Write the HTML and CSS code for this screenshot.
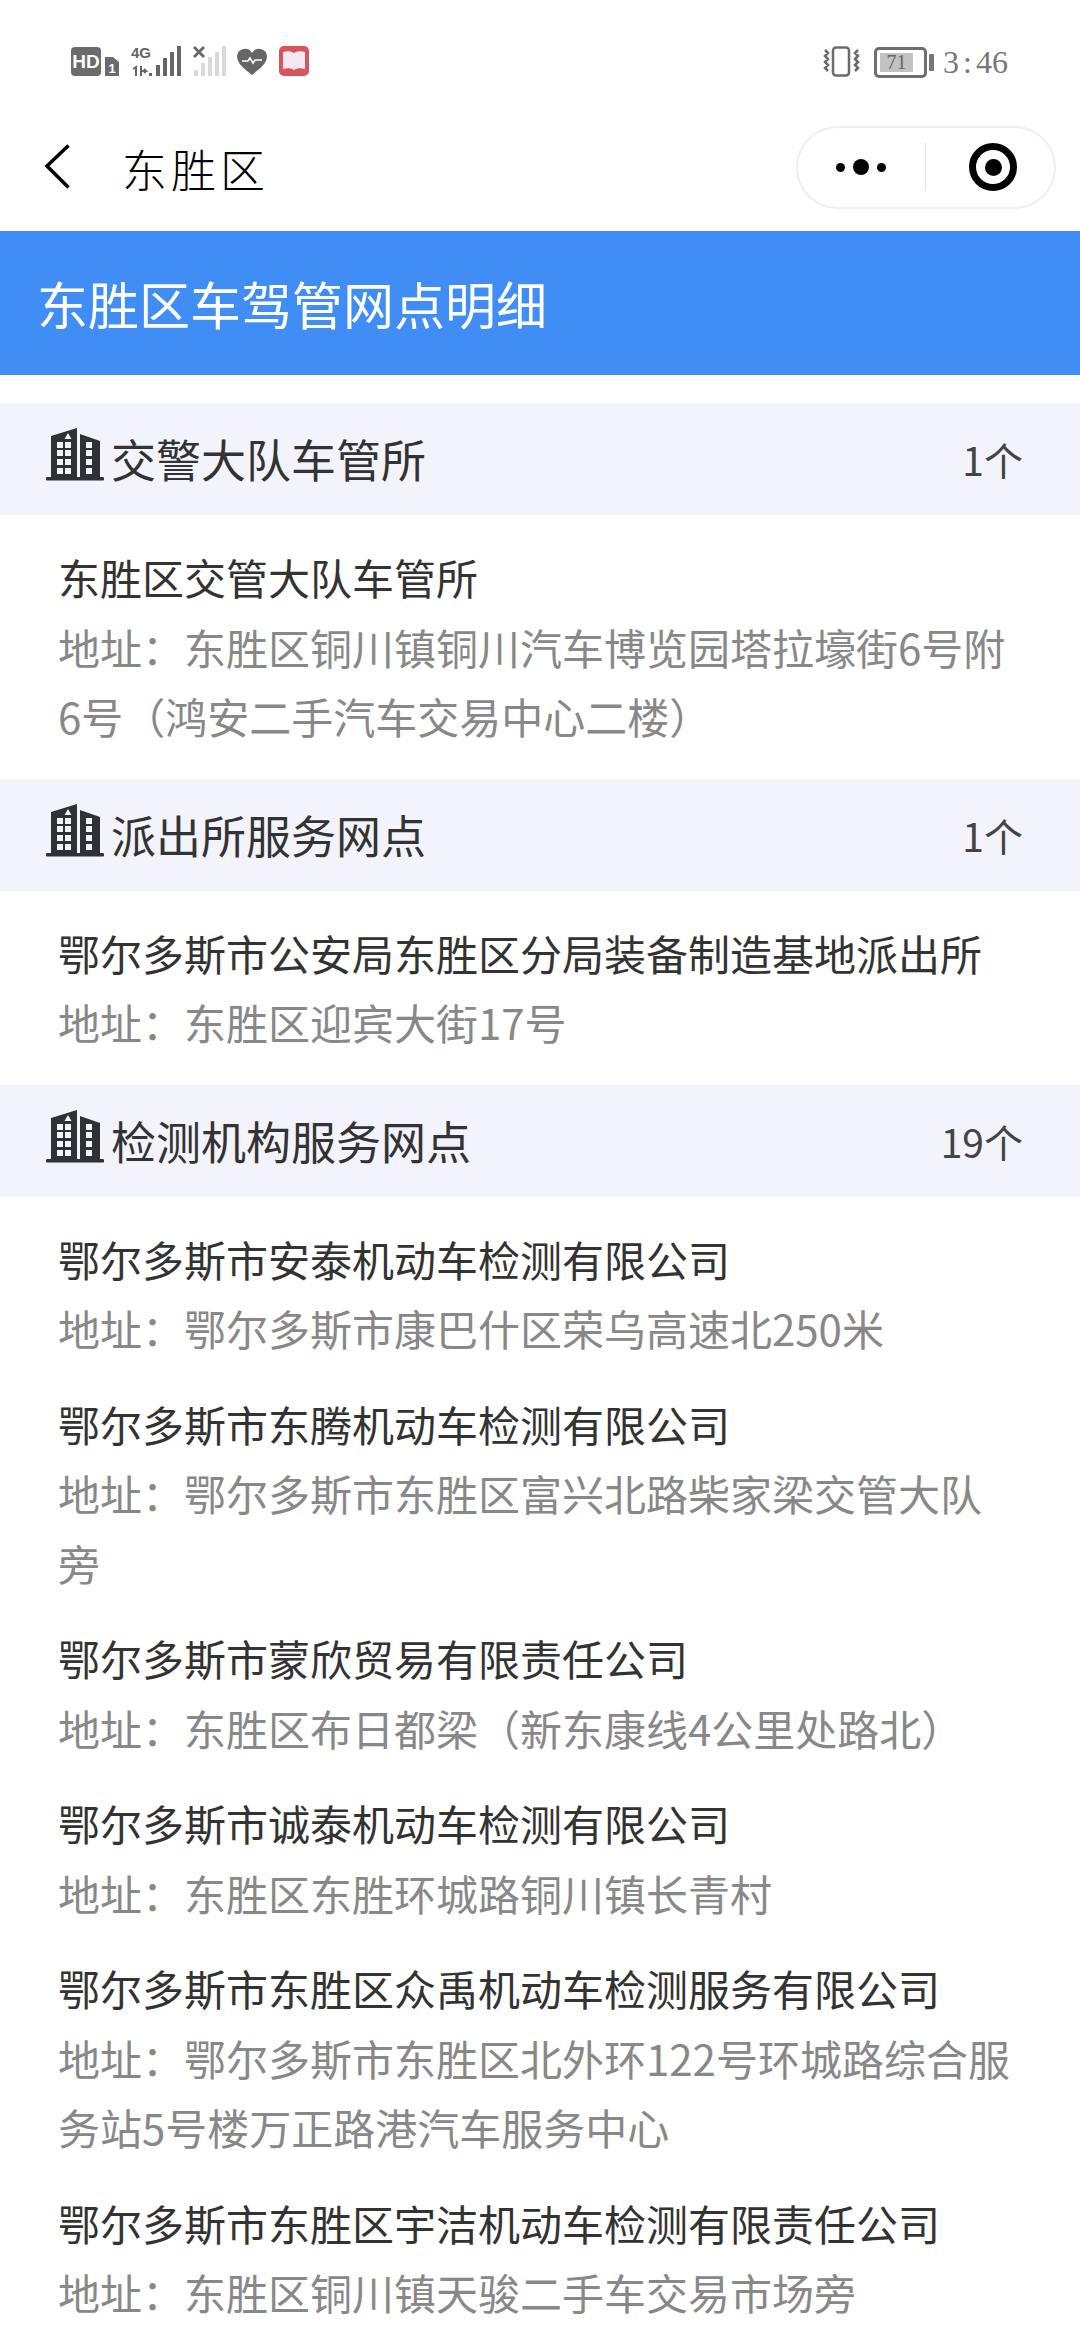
FILE: index.html
```html
<!DOCTYPE html>
<html lang="zh-CN">
<head>
<meta charset="utf-8">
<title>东胜区</title>
<link rel="stylesheet" href="styles.css">
</head>
<body>
<svg class="defs" width="0" height="0" aria-hidden="true">
  <symbol id="building" viewBox="0 0 58 54">
    <path fill="#2f3136" d="M1.500 49H5V8L31 0v49h3V6l20 7v36h2.500a1.800 1.800 0 0 1 0 3.600h-55a1.800 1.800 0 0 1 0-3.600z"/>
    <g fill="#f2f3fb">
      <path d="M22 5l3.500 6h-7z"/>
      <rect x="11" y="14" width="6" height="6"/><rect x="19" y="14" width="6" height="6"/>
      <rect x="11" y="22" width="6" height="6"/><rect x="19" y="22" width="6" height="6"/>
      <rect x="11" y="31" width="6" height="6"/><rect x="19" y="31" width="6" height="6"/>
      <rect x="11" y="40" width="6" height="6"/><rect x="19" y="40" width="6" height="6"/>
      <rect x="40" y="14" width="6" height="6"/><rect x="40" y="22" width="6" height="6"/>
      <rect x="40" y="31" width="6" height="6"/><rect x="40" y="40" width="6" height="6"/>
    </g>
  </symbol>
</svg>

<div class="status">
  <div class="status-left">
    <svg class="ic-hd" width="48" height="30" viewBox="0 0 48 30">
      <rect width="30" height="29" rx="4" fill="#6b6b6b"/>
      <text x="15" y="21" class="hd-text">HD</text>
      <path d="M34 10h8l6 5v14h-14z" fill="#6b6b6b"/>
      <text x="41" y="26" class="hd-one">1</text>
    </svg>
    <svg class="ic-sig" width="50" height="36" viewBox="0 -6 50 36">
      <text x="0" y="12" class="sig-text">4G</text>
      <path d="M5 30v-9l-3 2M10 20v10M10 25h5l-2-2M15 25l-2 2" fill="none" stroke="#666" stroke-width="2"/>
      <g fill="#666">
        <rect x="18" y="27" width="3" height="3"/><rect x="25" y="19" width="4" height="11"/>
        <rect x="32" y="12" width="4" height="18"/><rect x="39" y="6" width="4" height="24"/>
        <rect x="46" y="0" width="4" height="30"/>
      </g>
    </svg>
    <svg class="ic-sig2" width="33" height="30" viewBox="0 0 33 30">
      <path d="M1 1l10 10M11 1L1 11" stroke="#666" stroke-width="2.800" fill="none"/>
      <g fill="#d9d9d9">
        <rect x="1" y="24" width="4" height="6"/><rect x="8" y="17" width="4" height="13"/>
        <rect x="15" y="11" width="4" height="19"/><rect x="22" y="6" width="4" height="24"/>
        <rect x="29" y="0" width="4" height="30"/>
      </g>
    </svg>
    <svg class="ic-heart" width="30" height="27" viewBox="0 0 30 27">
      <path fill="#666" d="M15 27C8 21 0 16 0 8a8 8 0 0 1 15-3 8 8 0 0 1 15 3c0 8-8 13-15 19z"/>
      <path d="M5 13h6l2-3 3 5 2-3h7" stroke="#fff" stroke-width="1.600" fill="none"/>
    </svg>
    <svg class="ic-book" width="30" height="30" viewBox="0 0 30 30">
      <rect width="30" height="30" rx="5" fill="#d9545c"/>
      <path fill="#f4e9f1" d="M4 6c4-1 8-1 11 1 3-2 7-2 11-1v17c-4-1-8-1-11 1-3-2-7-2-11-1z"/>
    </svg>
  </div>
  <div class="status-right">
    <svg width="40" height="32" viewBox="0 0 40 32">
      <rect x="11" y="1.500" width="16" height="28" rx="3" fill="none" stroke="#6b6b6b" stroke-width="2.500"/>
      <path d="M3 4l3 3-3 3 3 3-3 3 3 3-3 3 3 3M36 4l-3 3 3 3-3 3 3 3-3 3 3 3-3 3" fill="none" stroke="#6b6b6b" stroke-width="2.500"/>
    </svg>
    <div class="battery"><span class="battery-fill">71</span></div>
    <span class="battery-cap"></span>
    <span class="clock">3<span class="colon">:</span>46</span>
  </div>
</div>

<div class="nav">
  <svg class="back" width="26" height="46" viewBox="0 0 26 46"><path d="M24.500 1.500L3 22l21.500 21.500" fill="none" stroke="#000" stroke-width="3.500"/></svg>
  <span class="nav-title">东胜区</span>
  <div class="capsule">
    <div class="dots"><i class="dot"></i><i class="dot big"></i><i class="dot"></i></div>
    <span class="divider"></span>
    <div class="target"><i></i></div>
  </div>
</div>

<h1 class="banner">东胜区车驾管网点明细</h1>

<main class="list">
  <section>
    <div class="head"><svg class="bld"><use href="#building"/></svg><span class="head-title">交警大队车管所</span><span class="count">1个</span></div>
    <div class="items">
      <div class="item"><div class="name">东胜区交管大队车管所</div><div class="addr">地址：东胜区铜川镇铜川汽车博览园塔拉壕街6号附6号（鸿安二手汽车交易中心二楼）</div></div>
    </div>
  </section>
  <section>
    <div class="head"><svg class="bld"><use href="#building"/></svg><span class="head-title">派出所服务网点</span><span class="count">1个</span></div>
    <div class="items">
      <div class="item"><div class="name">鄂尔多斯市公安局东胜区分局装备制造基地派出所</div><div class="addr">地址：东胜区迎宾大街17号</div></div>
    </div>
  </section>
  <section>
    <div class="head"><svg class="bld"><use href="#building"/></svg><span class="head-title">检测机构服务网点</span><span class="count">19个</span></div>
    <div class="items">
      <div class="item"><div class="name">鄂尔多斯市安泰机动车检测有限公司</div><div class="addr">地址：鄂尔多斯市康巴什区荣乌高速北250米</div></div>
      <div class="item"><div class="name">鄂尔多斯市东腾机动车检测有限公司</div><div class="addr">地址：鄂尔多斯市东胜区富兴北路柴家梁交管大队旁</div></div>
      <div class="item"><div class="name">鄂尔多斯市蒙欣贸易有限责任公司</div><div class="addr">地址：东胜区布日都梁（新东康线4公里处路北）</div></div>
      <div class="item"><div class="name">鄂尔多斯市诚泰机动车检测有限公司</div><div class="addr">地址：东胜区东胜环城路铜川镇长青村</div></div>
      <div class="item"><div class="name">鄂尔多斯市东胜区众禹机动车检测服务有限公司</div><div class="addr">地址：鄂尔多斯市东胜区北外环122号环城路综合服务站5号楼万正路港汽车服务中心</div></div>
      <div class="item"><div class="name">鄂尔多斯市东胜区宇洁机动车检测有限责任公司</div><div class="addr">地址：东胜区铜川镇天骏二手车交易市场旁</div></div>
    </div>
  </section>
</main>
</body>
</html>
```
FILE: styles.css
```css
* { box-sizing: border-box; }
html, body { margin: 0; padding: 0; }
body {
  width: 1080px;
  height: 2340px;
  overflow: hidden;
  background: #fff;
  font-family: "Noto Sans CJK SC", "Noto Sans", sans-serif;
}
.defs { position: absolute; }

.status {
  height: 108px;
  padding: 46px 72px 0 71px;
  display: flex;
  justify-content: space-between;
  align-items: flex-start;
}
.status-left { display: flex; align-items: flex-start; gap: 12px; }
.status-left svg, .status-right svg { display: block; }
.ic-hd { margin-top: 1px; }
.ic-sig { margin-top: -6px; }
.ic-heart { margin-top: 2px; margin-left: -1px; }
.hd-text { font: 700 19px "Liberation Sans", sans-serif; fill: #fff; text-anchor: middle; }
.hd-one { font: 700 13px "Liberation Sans", sans-serif; fill: #fff; text-anchor: middle; }
.sig-text { font: 700 15px "Liberation Sans", sans-serif; fill: #666; }
.status-right { display: flex; align-items: center; height: 32px; }
.battery {
  width: 53px;
  height: 31px;
  margin-left: 12px;
  border: 3px solid #6e6e6e;
  border-radius: 5px;
  padding: 3px;
  display: flex;
}
.battery-fill {
  width: 33px;
  background: #c2c2c2;
  color: #666;
  font: 20px/19px "Liberation Serif", serif;
  text-align: center;
}
.battery-cap { width: 5px; height: 17px; margin-left: 2px; background: #777; border-radius: 1px; }
.clock { margin-left: 9px; font: 32px/32px "Liberation Serif", serif; color: #777; }
.colon { margin: 0 4px; }

.nav {
  height: 123px;
  padding: 0 24px 5px 44px;
  display: flex;
  align-items: center;
}
.back { display: block; }
.nav-title { margin: 3px 0 0 52px; font-size: 45px; font-weight: 300; letter-spacing: 4px; color: #000; }
.capsule {
  margin-left: auto;
  width: 260px;
  height: 83px;
  border: 2px solid #efefef;
  border-radius: 42px;
  display: flex;
  align-items: center;
}
.dots { width: 125px; margin-right: 2px; display: flex; align-items: center; justify-content: center; gap: 8px; }
.dot { width: 9px; height: 9px; border-radius: 50%; background: #000; }
.dot.big { width: 16px; height: 16px; }
.divider { width: 1px; height: 48px; background: #e2e2e2; }
.target {
  width: 48px;
  height: 48px;
  margin-left: 43px;
  border: 7px solid #000;
  border-radius: 50%;
  display: flex;
  align-items: center;
  justify-content: center;
}
.target i { width: 17px; height: 17px; border-radius: 50%; background: #000; }

.banner {
  margin: 0;
  height: 144px;
  padding-left: 37px;
  background: #408ef5;
  color: #fff;
  font-size: 51px;
  font-weight: 400;
  line-height: 144px;
}

.list { padding-top: 28px; }
.head {
  height: 112px;
  padding: 0 57px 0 46px;
  background: #f2f3fb;
  display: flex;
  align-items: center;
}
.bld { width: 58px; height: 54px; margin-top: -8px; }
.head-title { margin-left: 7px; font-size: 45px; line-height: 56px; color: #333; }
.count { margin-left: auto; font-size: 39px; color: #444; }
.items { padding: 27px 58px 28px; }
.item { padding-bottom: 26px; }
.item:last-child { padding-bottom: 0; }
.name, .addr { font-size: 42px; line-height: 69.500px; }
.name { color: #333; }
.addr { color: #888; }
```
